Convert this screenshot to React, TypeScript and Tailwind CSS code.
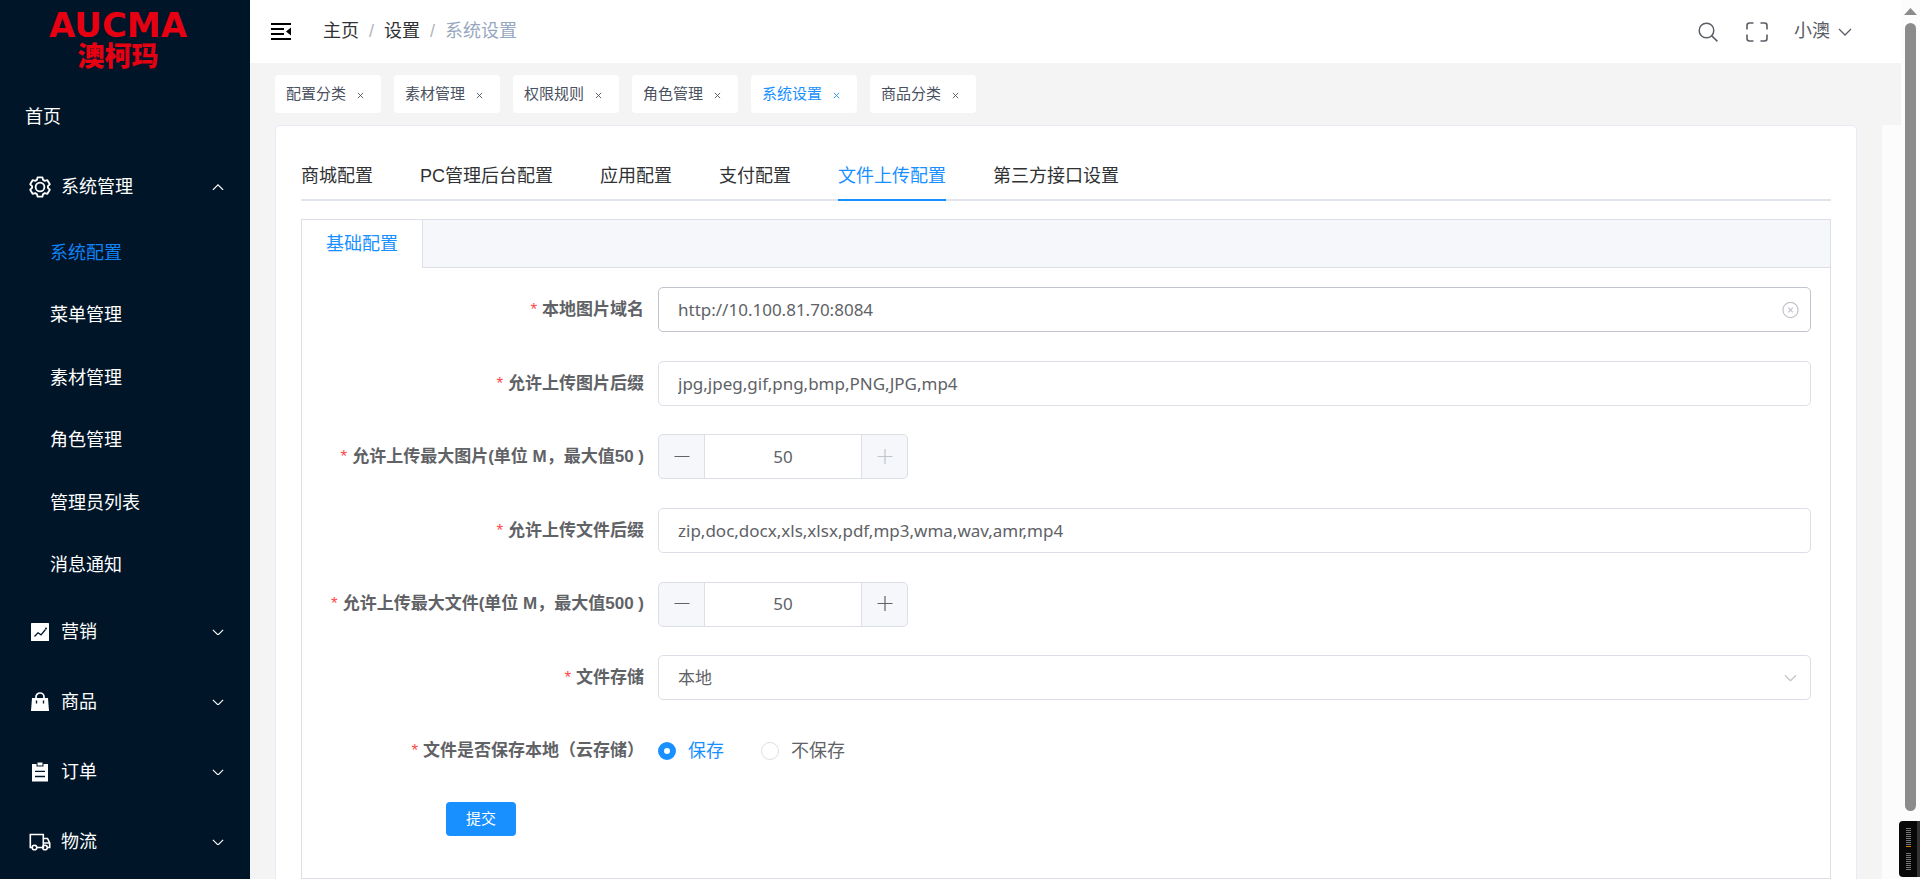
import { useState } from "react";
import type { ReactNode } from "react";

const svgBase = { fill: "none", stroke: "currentColor", "aria-hidden": true } as const;

function Chevron({ up = false, className = "" }: { up?: boolean; className?: string }) {
  return (
    <svg {...svgBase} viewBox="0 0 14 8" className={className} strokeWidth="1.3">
      <path d={up ? "M1 7 7 1l6 6" : "M1 1l6 6 6-6"} />
    </svg>
  );
}

function GearIcon() {
  return (
    <svg {...svgBase} viewBox="0 0 22 22" className="size-[22px]" strokeWidth="1.8">
      <path
        d="M8.6 1.3h4.8l.7 2.6 1.7 1 2.6-.7 2.4 4.1-1.9 1.9v1.6l1.9 1.9-2.4 4.1-2.6-.7-1.7 1-.7 2.6H8.6l-.7-2.6-1.7-1-2.6.7-2.4-4.1 1.9-1.9v-1.6L1.2 8.3l2.4-4.1 2.6.7 1.7-1z"
        strokeLinejoin="round"
      />
      <circle cx="11" cy="11" r="4.400" />
    </svg>
  );
}

function MarketingIcon() {
  return (
    <svg viewBox="0 0 22 22" className="size-[22px]" aria-hidden>
      <rect x="2" y="2" width="18" height="18" rx=".6" fill="#fff" />
      <path d="M5.500 15.500 9 11.800l3 2 4.500-5.300" fill="none" stroke="#001528" strokeWidth="1.300" />
      <circle cx="17" cy="7.500" r="1" fill="#001528" />
    </svg>
  );
}

function GoodsIcon() {
  return (
    <svg viewBox="0 0 22 22" className="size-[22px]" aria-hidden>
      <path d="M3 7h16l1 13H2z" fill="#fff" />
      <path d="M7 7.500V6a4 4 0 0 1 8 0v1.500" fill="none" stroke="#fff" strokeWidth="1.700" />
      <path d="M7.500 9.500v3M14.500 9.500v3" stroke="#001528" strokeWidth="1.300" />
    </svg>
  );
}

function OrderIcon() {
  return (
    <svg viewBox="0 0 22 22" className="size-[22px]" aria-hidden>
      <path d="M3 3h4.500v2.500h7V3H19v17.500H3z" fill="#fff" />
      <rect x="8.500" y="1.500" width="5" height="3" fill="#fff" />
      <path d="M6 10.300h10M6 15.500h10" stroke="#001528" strokeWidth="1.300" />
    </svg>
  );
}

function TruckIcon() {
  return (
    <svg {...svgBase} viewBox="0 0 22 22" className="size-[22px]" strokeWidth="1.600">
      <path d="M3.500 16.500H1.300V3.500h13v13H8M14.300 7.500h4.200l2.200 4.500v4.500h-2M14.300 12h6" />
      <circle cx="5.500" cy="16.500" r="2.300" />
      <circle cx="16" cy="16.500" r="2.300" />
    </svg>
  );
}

const subMenu = ["系统配置", "菜单管理", "素材管理", "角色管理", "管理员列表", "消息通知"];

function MenuGroup({ icon, label, open = false }: { icon: ReactNode; label: string; open?: boolean }) {
  return (
    <button type="button" aria-expanded={open} className="flex h-[70px] w-full items-center pr-[26px] pl-[29px] text-left">
      {icon}
      <span className="ml-[10px] flex-1">{label}</span>
      <Chevron up={open} className="w-3" />
    </button>
  );
}

function Sidebar() {
  return (
    <aside className="w-[250px] shrink-0 overflow-hidden bg-[#001528] text-[18px] text-white">
      <div className="flex h-[83px] flex-col items-center gap-1 pt-[9px] pr-[14px] font-bold text-[#e60012]">
        <span className="font-['DejaVu_Sans'] text-[34px] leading-8">AUCMA</span>
        <span className="text-[27px] leading-6 font-black">澳柯玛</span>
      </div>
      <nav>
        <a href="#home" className="flex h-[69px] items-center pl-[25px]">首页</a>
        <MenuGroup icon={<GearIcon />} label="系统管理" open />
        <ul className="grid h-[375px] grid-rows-6">
          {subMenu.map((item, i) => (
            <li key={item} className="flex items-center pl-[50px]">
              <a href="#menu" className={i === 0 ? "text-[#1083f5]" : ""}>{item}</a>
            </li>
          ))}
        </ul>
        <MenuGroup icon={<MarketingIcon />} label="营销" />
        <MenuGroup icon={<GoodsIcon />} label="商品" />
        <MenuGroup icon={<OrderIcon />} label="订单" />
        <MenuGroup icon={<TruckIcon />} label="物流" />
      </nav>
    </aside>
  );
}

function Header() {
  return (
    <header className="flex h-[63px] shrink-0 items-center bg-white pr-[49px] pl-[21px] text-[18px] text-[#303133]">
      <button type="button" aria-label="收起菜单">
        <svg viewBox="0 0 20 18" className="h-[18px] w-5 text-black" aria-hidden>
          <path d="M0 1h20M0 6h13M0 11h13M0 16h20" stroke="currentColor" strokeWidth="1.800" />
          <path d="M20 4.500v8l-5-4z" fill="currentColor" />
        </svg>
      </button>
      <nav aria-label="breadcrumb" className="ml-8 flex items-center gap-[10px]">
        <a href="#main">主页</a>
        <span className="text-[#b0b5bf]">/</span>
        <a href="#set">设置</a>
        <span className="text-[#b0b5bf]">/</span>
        <span className="text-[#97a8be]">系统设置</span>
      </nav>
      <div className="ml-auto flex items-center text-[#5a5e66]">
        <button type="button" aria-label="搜索">
          <svg {...svgBase} viewBox="0 0 20 20" className="size-5" strokeWidth="1.500">
            <circle cx="8.500" cy="8.500" r="7.300" />
            <path d="m13.600 13.600 5.800 5.800" />
          </svg>
        </button>
        <button type="button" aria-label="全屏" className="ml-7">
          <svg {...svgBase} viewBox="0 0 22 20" className="h-5 w-[22px]" strokeWidth="1.600">
            <path d="M1 7.500V3.500Q1 1 3.500 1H7.500M14.500 1h4Q21 1 21 3.500v4M21 12.500v4q0 2.500-2.500 2.500h-4M7.500 19h-4Q1 19 1 16.500v-4" />
          </svg>
        </button>
        <button type="button" className="ml-[26px] flex items-center gap-2">
          小澳
          <Chevron className="w-[14px]" />
        </button>
      </div>
    </header>
  );
}

const pageTabs = ["配置分类", "素材管理", "权限规则", "角色管理", "系统设置", "商品分类"];

function PageTabs() {
  return (
    <div className="flex shrink-0 gap-[13px] px-[25px] py-3 text-[15px] text-[#495060]">
      {pageTabs.map((tab) => (
        <div
          key={tab}
          className={
            "flex h-[38px] w-[106px] items-center rounded bg-white pl-[11px] " +
            (tab === "系统设置" ? "text-[#1890ff]" : "")
          }
        >
          <a href="#tab">{tab}</a>
          <button type="button" aria-label={"关闭" + tab} className="mt-[2px] ml-[11px]">
            <svg {...svgBase} viewBox="0 0 8 8" className="size-[7px]" strokeWidth="1">
              <path d="m1 1 6 6M7 1 1 7" />
            </svg>
          </button>
        </div>
      ))}
    </div>
  );
}

const configTabs = ["商城配置", "PC管理后台配置", "应用配置", "支付配置", "文件上传配置", "第三方接口设置"];

function Row({ label, htmlFor, children }: { label: string; htmlFor: string; children: ReactNode }) {
  return (
    <div className="flex h-[45px] items-center">
      <label htmlFor={htmlFor} className="w-[337px] shrink-0 pr-[14px] text-right text-[17px] font-bold whitespace-pre">
        <span className="mr-[5px] font-normal text-[#ff4949]">*</span>
        {label}
      </label>
      <div className="min-w-0 flex-1">{children}</div>
    </div>
  );
}

const field =
  "block h-[45px] w-full rounded-[5px] border bg-white px-[19px] font-['Noto_Sans','Noto_Sans_CJK_SC',sans-serif] text-[17px] outline-none ";

function NumberField({ id, max }: { id: string; max: number }) {
  const [value, setValue] = useState(50);
  return (
    <div className="flex h-[45px] w-[250px] overflow-hidden rounded-[5px] border border-[#dcdfe6] bg-[#f5f7fa]">
      <button type="button" aria-label="减少" className="grid w-[45px] place-items-center" onClick={() => setValue(Math.max(0, value - 1))}>
        <svg {...svgBase} viewBox="0 0 16 16" className="size-4" strokeWidth="1.200">
          <path d="M.5 7.500h15" />
        </svg>
      </button>
      <input
        id={id}
        value={value}
        onChange={(e) => setValue(Math.min(max, Number(e.target.value) || 0))}
        className="min-w-0 flex-1 border-x border-[#dcdfe6] bg-white text-center font-['Noto_Sans'] text-[17px] outline-none"
      />
      <button
        type="button"
        aria-label="增加"
        disabled={value >= max}
        className="grid w-[45px] place-items-center disabled:text-[#c0c4cc]"
        onClick={() => setValue(value + 1)}
      >
        <svg {...svgBase} viewBox="0 0 16 16" className="size-4" strokeWidth="1.200">
          <path d="M.5 7.500h15M8 0v15" />
        </svg>
      </button>
    </div>
  );
}

function SaveOption({ id, value, label, defaultChecked = false }: { id: string; value: string; label: string; defaultChecked?: boolean }) {
  return (
    <label htmlFor={id} className="flex items-center gap-3 has-checked:text-[#1890ff]">
      <input
        id={id}
        type="radio"
        name="save"
        value={value}
        defaultChecked={defaultChecked}
        className="size-[18px] appearance-none rounded-full border border-[#dcdfe6] bg-white checked:border-[6px] checked:border-[#1890ff]"
      />
      {label}
    </label>
  );
}

function UploadForm() {
  return (
    <form className="px-[19px] pt-[5px] pb-[42px] text-[#606266]" onSubmit={(e) => e.preventDefault()}>
      <div className="grid h-[515px] grid-rows-7 items-center">
        <Row label="本地图片域名" htmlFor="domain">
          <div className="relative">
            <input id="domain" defaultValue="http://10.100.81.70:8084" className={field + "border-[#c0c4cc]"} />
            <button type="button" aria-label="清空" className="absolute top-1/2 right-3 -translate-y-1/2 text-[#c0c4cc]">
              <svg {...svgBase} viewBox="0 0 18 18" className="size-[17px]" strokeWidth="1.300">
                <circle cx="9" cy="9" r="8" />
                <path d="m6.500 6.500 5 5M11.500 6.500l-5 5" />
              </svg>
            </button>
          </div>
        </Row>
        <Row label="允许上传图片后缀" htmlFor="image-ext">
          <input id="image-ext" defaultValue="jpg,jpeg,gif,png,bmp,PNG,JPG,mp4" className={field + "border-[#dcdfe6]"} />
        </Row>
        <Row label="允许上传最大图片(单位 M，最大值50 )" htmlFor="image-max">
          <NumberField id="image-max" max={50} />
        </Row>
        <Row label="允许上传文件后缀" htmlFor="file-ext">
          <input id="file-ext" defaultValue="zip,doc,docx,xls,xlsx,pdf,mp3,wma,wav,amr,mp4" className={field + "border-[#dcdfe6]"} />
        </Row>
        <Row label="允许上传最大文件(单位 M，最大值500 )" htmlFor="file-max">
          <NumberField id="file-max" max={500} />
        </Row>
        <Row label="文件存储" htmlFor="storage">
          <div className="relative">
            <select id="storage" className={field + "appearance-none border-[#dcdfe6]"}>
              <option>本地</option>
            </select>
            <Chevron className="pointer-events-none absolute top-1/2 right-[14px] w-[13px] -translate-y-1/2 text-[#c0c4cc]" />
          </div>
        </Row>
        <Row label="文件是否保存本地（云存储）" htmlFor="save-yes">
          <div className="flex gap-[37px]">
            <SaveOption id="save-yes" value="1" label="保存" defaultChecked />
            <SaveOption id="save-no" value="0" label="不保存" />
          </div>
        </Row>
      </div>
      <button type="submit" className="mt-[14px] ml-[125px] block h-[34px] rounded bg-[#1890ff] px-5 text-[15px] text-white">
        提交
      </button>
    </form>
  );
}

export default function App() {
  return (
    <div className="flex h-screen overflow-hidden bg-[#f4f4f4] font-['Liberation_Sans','Noto_Sans_CJK_SC',sans-serif]">
      <Sidebar />
      <div className="flex min-w-0 flex-1 flex-col">
        <Header />
        <PageTabs />
        <div className="flex min-h-0 flex-1">
          <main className="min-w-0 flex-1 overflow-hidden px-[25px] text-[18px]">
            <section className="rounded-[5px] border border-[#e6ebf5] bg-white p-[25px]">
              <nav className="flex gap-[47px] border-b-2 border-[#dfe4ed] text-[#303133]">
                {configTabs.map((tab) => (
                  <a
                    key={tab}
                    href="#config"
                    className={
                      "-mb-[2px] flex h-[50px] items-center border-b-2 pt-[2px] " +
                      (tab === "文件上传配置" ? "border-[#1890ff] text-[#1890ff]" : "border-transparent")
                    }
                  >
                    {tab}
                  </a>
                ))}
              </nav>
              <div className="mt-[18px] border border-[#dcdfe6]">
                <div className="flex h-12 bg-[#f5f7fa]">
                  <button type="button" className="border-r border-[#dcdfe6] bg-white px-6 text-[#1890ff]">基础配置</button>
                  <div className="flex-1 border-b border-[#dcdfe6]" />
                </div>
                <UploadForm />
              </div>
            </section>
          </main>
          <div className="w-[19px] shrink-0 bg-[#fcfcfc]" />
        </div>
      </div>
      <div className="flex w-[19px] shrink-0 flex-col items-center bg-[#fcfcfc] pt-2 pb-[68px]">
        <svg viewBox="0 0 13 7" className="h-[7px] w-[13px]" aria-hidden>
          <path d="M0 7 6.500 0 13 7z" fill="#8b8b8b" />
        </svg>
        <div className="mt-2 w-[11px] flex-1 rounded-full bg-[#8b8b8b]" />
      </div>
      <div className="fixed right-0 bottom-[2px] flex h-[56px] w-[21px] flex-col items-center gap-[6px] rounded-l border-r-[3px] border-[#333] bg-[#080808] pt-[7px]">
        <div className="flex flex-col gap-px">
          {Array.from({ length: 10 }, (_, i) => (
            <div key={i} className={"h-px w-[5px] " + (i === 9 ? "bg-[#d98200]" : "bg-[#777]")} />
          ))}
        </div>
        <div className="flex flex-col gap-px">
          {Array.from({ length: 9 }, (_, i) => (
            <div key={i} className="h-px w-[5px] bg-[#777]" />
          ))}
        </div>
      </div>
    </div>
  );
}
